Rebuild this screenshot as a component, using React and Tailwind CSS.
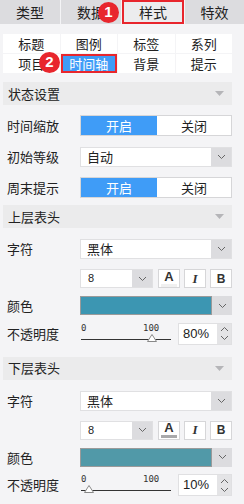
import React from "react";

const font = { fontFamily: '"Noto Sans CJK SC", "Noto Sans", sans-serif' };

function Chevron({ className = "" }) {
  return (
    <svg width="9" height="6" viewBox="0 0 9 6" className={className}>
      <path d="M1 1 L4.5 4.5 L8 1" fill="none" stroke="#666" strokeWidth="1" />
    </svg>
  );
}

function Badge({ n, className }) {
  return (
    <div
      className={`absolute flex h-[21px] w-[21px] items-center justify-center rounded-full bg-[#e8262d] text-[15px] font-bold text-white ${className}`}
      style={{ fontFamily: '"Liberation Sans", sans-serif' }}
    >
      {n}
    </div>
  );
}

function Section({ title }) {
  return (
    <div className="flex h-[23px] items-center justify-between bg-[#ebebec] pl-[5px] pr-[8px] text-[13px] text-[#222]">
      <span>{title}</span>
      <svg width="9" height="5" viewBox="0 0 9 5">
        <path d="M0 0 L9 0 L4.5 5 Z" fill="#b5b5b8" />
      </svg>
    </div>
  );
}

function Row({ label, children, className = "" }) {
  return (
    <div className={`flex items-center ${className}`}>
      <div className="w-[77px] pl-[4px] text-[13px] text-[#222]">{label}</div>
      <div className="flex-1">{children}</div>
    </div>
  );
}

function Toggle() {
  return (
    <div className="flex h-[21px] border border-[#d6d6d8] bg-white text-[13px]">
      <div className="flex w-[76px] items-center justify-center bg-[#3f9cf7] text-white">开启</div>
      <div className="flex flex-1 items-center justify-center text-[#222]">关闭</div>
    </div>
  );
}

function Select({ value }) {
  return (
    <div className="flex h-[20px] border border-[#e0e0e2] bg-white">
      <div className="flex flex-1 items-center pl-[6px] text-[13px] text-[#222]">{value}</div>
      <div className="flex w-[20px] items-center justify-center bg-[#dcdcdf]">
        <Chevron />
      </div>
    </div>
  );
}

function FontRow({ underline }) {
  return (
    <div className="flex items-center pl-[77px]">
      <div className="flex h-[19px] w-[73px] border border-[#e0e0e2] bg-white">
        <div className="flex flex-1 items-center pl-[7px] text-[11px] text-[#222]" style={{ fontFamily: '"Liberation Sans", sans-serif' }}>8</div>
        <div className="flex w-[20px] items-center justify-center bg-[#dcdcdf]">
          <Chevron />
        </div>
      </div>
      <div className="ml-[5px] flex h-[19px] w-[22px] flex-col items-center justify-center border border-[#d6d6d8] bg-white">
        <span className="text-[13px] font-black leading-[12px] text-[#333]" style={{ fontFamily: '"Liberation Sans", sans-serif' }}>A</span>
        <div className={`mt-[1px] h-[3px] w-[16px] ${underline}`} />
      </div>
      <div className="ml-[4px] flex h-[19px] w-[22px] items-center justify-center border border-[#d6d6d8] bg-white">
        <span className="text-[13px] font-bold italic text-[#333]" style={{ fontFamily: '"Liberation Serif", serif' }}>I</span>
      </div>
      <div className="ml-[4px] flex h-[19px] w-[22px] items-center justify-center border border-[#d6d6d8] bg-white">
        <span className="text-[12px] font-black text-[#333]" style={{ fontFamily: '"Liberation Sans", sans-serif' }}>B</span>
      </div>
    </div>
  );
}

function ColorRow({ color }) {
  return (
    <Row label="颜色">
      <div className="flex h-[19px]">
        <div className={`flex-1 border border-[#9a9a9a] ${color}`} />
        <div className="flex w-[20px] items-center justify-center bg-[#dcdcdf]">
          <Chevron />
        </div>
      </div>
    </Row>
  );
}

function Opacity({ value, thumb }) {
  return (
    <Row label="不透明度">
      <div className="flex items-center">
        <div className="relative h-[24px] w-[96px]" style={{ fontFamily: '"DejaVu Sans Mono", monospace' }}>
          <span className="absolute left-[4px] top-[0px] text-[9px] text-[#333]">0</span>
          <span className="absolute left-[66px] top-[0px] text-[9px] text-[#333]">100</span>
          <div className="absolute left-[4px] top-[17px] h-px w-[90px] bg-[#333]" />
          <svg className="absolute top-[12px]" style={{ left: thumb }} width="10" height="8" viewBox="0 0 10 8">
            <path d="M5 0.5 L9.5 7.5 L0.5 7.5 Z" fill="#fff" stroke="#888" />
          </svg>
        </div>
        <div className="ml-[5px] flex h-[22px] w-[54px] border border-[#e0e0e2] bg-white">
          <div className="flex flex-1 items-center pl-[4px] text-[13px] text-[#222]" style={{ fontFamily: '"Liberation Sans", sans-serif' }}>
            {value}
          </div>
          <div className="flex w-[14px] flex-col items-center justify-center gap-[3px] bg-[#e4e4e6]">
            <Chevron className="rotate-180" />
            <Chevron />
          </div>
        </div>
      </div>
    </Row>
  );
}

export default function App() {
  const subTabs = ["标题", "图例", "标签", "系列", "项目", "时间轴", "背景", "提示"];
  return (
    <div className="relative h-[504px] w-[244px] overflow-hidden bg-[#f4f4f6]" style={font}>
      {/* top tabs */}
      <div className="flex h-[24px] gap-px bg-[#f4f4f6] text-[14px] text-[#222]">
        <div className="flex w-[60px] items-center justify-center bg-[#dcdcdf]">类型</div>
        <div className="flex w-[60px] items-center justify-center bg-[#dcdcdf]">数据</div>
        <div className="flex w-[62px] items-center justify-center border-2 border-[#e8262d] bg-[#ececee]">样式</div>
        <div className="flex flex-1 items-center justify-center bg-[#dcdcdf]">特效</div>
      </div>
      <Badge n="1" className="left-[98px] top-[2px]" />

      <div className="w-[232px] pl-[3px]">
        {/* sub tabs */}
        <div className="mt-[10px] grid grid-cols-4 gap-px text-[13px] text-[#222]">
          {subTabs.map((t) =>
            t === "时间轴" ? (
              <div key={t} className="flex h-[19px] items-center justify-center border-2 border-[#e8262d] bg-[#3f9cf7] text-white">
                {t}
              </div>
            ) : (
              <div key={t} className="flex h-[19px] items-center justify-center bg-white">
                {t}
              </div>
            )
          )}
        </div>

        <div className="mt-[9px]">
          <Section title="状态设置" />
        </div>
        <Row label="时间缩放" className="mt-[10px]">
          <Toggle />
        </Row>
        <Row label="初始等级" className="mt-[11px]">
          <Select value="自动" />
        </Row>
        <Row label="周末提示" className="mt-[10px]">
          <Toggle />
        </Row>

        <div className="mt-[7px]">
          <Section title="上层表头" />
        </div>
        <Row label="字符" className="mt-[11px]">
          <Select value="黑体" />
        </Row>
        <div className="mt-[10px]">
          <FontRow underline="bg-[#f0f0f0]" />
        </div>
        <div className="mt-[8px]">
          <ColorRow color="bg-[#3c96b2]" />
        </div>
        <div className="mt-[6px]">
          <Opacity value="80%" thumb="70px" />
        </div>

        <div className="mt-[11px]">
          <Section title="下层表头" />
        </div>
        <Row label="字符" className="mt-[11px]">
          <Select value="黑体" />
        </Row>
        <div className="mt-[10px]">
          <FontRow underline="bg-[#a9a9ab]" />
        </div>
        <div className="mt-[8px]">
          <ColorRow color="bg-[#5199a8]" />
        </div>
        <div className="mt-[6px]">
          <Opacity value="10%" thumb="7px" />
        </div>
      </div>
      <Badge n="2" className="left-[39px] top-[52px]" />
    </div>
  );
}
